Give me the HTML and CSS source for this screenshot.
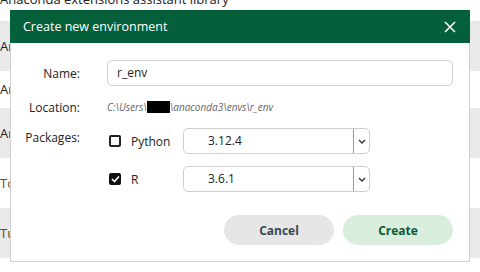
FILE: index.html
```html
<!DOCTYPE html>
<html lang="en">
<head>
    <meta charset="UTF-8">
    <meta name="viewport" content="width=device-width, initial-scale=1.0">
    <link rel="stylesheet" href="styles.css">
    <title>Create new environment</title>
</head>
<body>
    <div class="page">
        <div class="page-title">Anaconda extensions assistant library</div>
        <div class="row shaded">Anaconda Navigator</div>
        <div class="row short">Anaconda Notebooks</div>
        <div class="row shaded">Anaconda Toolbox</div>
        <div class="row tag">Tools</div>
        <div class="row shaded tag">Tutorials</div>
    </div>

    <div class="dialog">
        <div class="dialog-header">
            <span class="dialog-title">Create new environment</span>
            <svg class="close" width="12" height="12" viewBox="0 0 12 12">
                <path d="M1 1 L11 11 M11 1 L1 11" stroke="#fff" stroke-width="1.6" fill="none"/>
            </svg>
        </div>
        <div class="dialog-body">
            <label class="label">Name:</label>
            <div class="name-input">r_env</div>

            <label class="label">Location:</label>
            <div class="location">C:\Users\<span class="redacted"></span>\anaconda3\envs\r_env</div>

            <label class="label label-top">Packages:</label>
            <div class="packages">
                <div class="package">
                    <span class="check"></span>
                    <span class="pkg-name">Python</span>
                    <div class="select">
                        <span class="select-value">3.12.4</span>
                        <span class="select-arrow">
                            <svg width="8" height="5" viewBox="0 0 8 5"><path d="M1 1 L4 4 L7 1" stroke="#333" stroke-width="1.4" fill="none"/></svg>
                        </span>
                    </div>
                </div>
                <div class="package">
                    <span class="check checked">
                        <svg width="9" height="8" viewBox="0 0 9 8"><path d="M1 4 L3.5 6.5 L8 1.5" stroke="#fff" stroke-width="1.6" fill="none"/></svg>
                    </span>
                    <span class="pkg-name">R</span>
                    <div class="select">
                        <span class="select-value">3.6.1</span>
                        <span class="select-arrow">
                            <svg width="8" height="5" viewBox="0 0 8 5"><path d="M1 1 L4 4 L7 1" stroke="#333" stroke-width="1.4" fill="none"/></svg>
                        </span>
                    </div>
                </div>
            </div>
        </div>
        <div class="dialog-footer">
            <button class="btn btn-cancel">Cancel</button>
            <button class="btn btn-create">Create</button>
        </div>
    </div>
</body>
</html>
```

FILE: styles.css
```css
body {
    margin: 0;
    font-family: 'Open Sans', 'Noto Sans', sans-serif;
    background-color: #ffffff;
    color: #222222;
    overflow: hidden;
}

.page {
    font-size: 13px;
}

.page-title {
    height: 21px;
    line-height: 12px;
    margin-top: -7px;
    margin-bottom: 7px;
    white-space: nowrap;
}

.row {
    height: 50px;
    line-height: 50px;
    color: #222222;
}

.row.short {
    height: 37px;
    line-height: 37px;
}

.shaded {
    background-color: #e9e9e9;
}

.tag {
    color: #6b4a1e;
}

.dialog {
    position: absolute;
    left: 10px;
    top: 10px;
    width: 458px;
    height: 251px;
    background-color: #ffffff;
    border: 1px solid #d2d2d2;
    border-top: none;
    display: flex;
    flex-direction: column;
}

.dialog-header {
    height: 33px;
    margin: 0 -1px;
    background-color: #03603a;
    color: #ffffff;
    display: flex;
    align-items: center;
    justify-content: space-between;
    padding: 0 14px 0 13px;
}

.dialog-title {
    font-size: 12.5px;
}

.dialog-body {
    display: grid;
    grid-template-columns: 69px 1fr;
    column-gap: 27px;
    row-gap: 8px;
    align-items: center;
    padding: 17px 16px 0 0;
}

.label {
    text-align: right;
    font-size: 12px;
    color: #222222;
}

.label-top {
    align-self: start;
    padding-top: 1px;
}

.name-input {
    height: 24px;
    border: 1px solid #cfcfcf;
    border-radius: 5px;
    font-size: 12px;
    line-height: 24px;
    padding-left: 9px;
}

.location {
    font-size: 10px;
    font-style: italic;
    color: #666666;
    height: 26px;
    line-height: 26px;
}

.redacted {
    display: inline-block;
    width: 23px;
    height: 12px;
    background-color: #000000;
    vertical-align: -2px;
}

.packages {
    display: flex;
    flex-direction: column;
    gap: 12px;
}

.package {
    display: flex;
    align-items: center;
    padding-left: 2px;
}

.check {
    width: 8px;
    height: 8px;
    border: 2px solid #222222;
    border-radius: 2px;
    display: flex;
    align-items: center;
    justify-content: center;
}

.check.checked {
    background-color: #111111;
    border-color: #111111;
}

.check svg {
    flex-shrink: 0;
}

.pkg-name {
    font-size: 12px;
    width: 52px;
    margin-left: 10px;
}

.select {
    width: 185px;
    height: 24px;
    border: 1px solid #cfcfcf;
    border-radius: 5px;
    display: flex;
    font-size: 12px;
}

.select-value {
    flex: 1;
    line-height: 24px;
    padding-left: 24px;
}

.select-arrow {
    width: 15px;
    border-left: 1px solid #9a9a9a;
    display: flex;
    align-items: center;
    justify-content: center;
}

.dialog-footer {
    margin-top: auto;
    display: flex;
    justify-content: flex-end;
    gap: 9px;
    padding: 0 16px 16px 0;
}

.btn {
    width: 110px;
    height: 30px;
    border: none;
    border-radius: 15px;
    font-family: 'Open Sans', 'Noto Sans', sans-serif;
    font-size: 12px;
    font-weight: bold;
    cursor: pointer;
}

.btn-cancel {
    background-color: #e6e6e6;
    color: #3e4650;
}

.btn-create {
    background-color: #d9eedc;
    color: #0b5a38;
}
```
